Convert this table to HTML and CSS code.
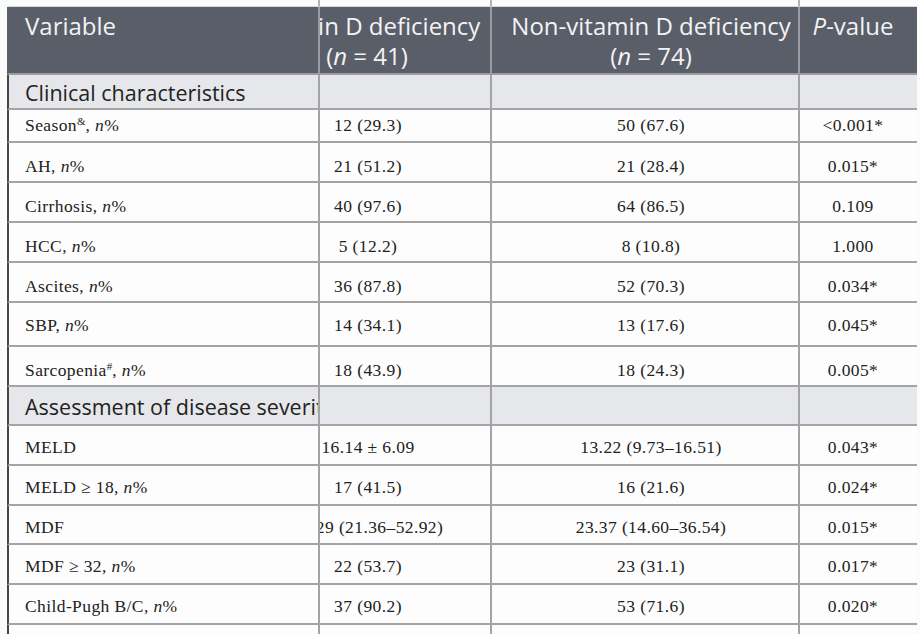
FILE: index.html
```html
<!DOCTYPE html>
<html lang="en">
<head>
<meta charset="utf-8">
<title>Table</title>
<link rel="stylesheet" href="styles.css">
</head>
<body>
<table class="tbl">
  <colgroup><col class="c1"><col class="c2"><col class="c3"><col class="c4"></colgroup>
  <thead>
    <tr class="strip"><td></td><td></td><td></td><td></td></tr>
    <tr class="head">
      <th class="var">Variable</th>
      <th class="g1"><div class="shift">Vitamin D deficiency<br>(<i>n</i> = 41)</div></th>
      <th class="g2">Non-vitamin D deficiency<br>(<i>n</i> = 74)</th>
      <th class="pv"><i>P</i>-value</th>
    </tr>
  </thead>
  <tbody class="clin">
    <tr class="sec"><td>Clinical characteristics</td><td></td><td></td><td></td></tr>
    <tr class="short"><td>Season<sup>&amp;</sup>, <i>n</i>%</td><td class="g1"><div class="shift">12 (29.3)</div></td><td class="g2">50 (67.6)</td><td class="pv">&lt;0.001*</td></tr>
    <tr><td>AH, <i>n</i>%</td><td class="g1"><div class="shift">21 (51.2)</div></td><td class="g2">21 (28.4)</td><td class="pv">0.015*</td></tr>
    <tr><td>Cirrhosis, <i>n</i>%</td><td class="g1"><div class="shift">40 (97.6)</div></td><td class="g2">64 (86.5)</td><td class="pv">0.109</td></tr>
    <tr><td>HCC, <i>n</i>%</td><td class="g1"><div class="shift">5 (12.2)</div></td><td class="g2">8 (10.8)</td><td class="pv">1.000</td></tr>
    <tr><td>Ascites, <i>n</i>%</td><td class="g1"><div class="shift">36 (87.8)</div></td><td class="g2">52 (70.3)</td><td class="pv">0.034*</td></tr>
    <tr class="tall"><td>SBP, <i>n</i>%</td><td class="g1"><div class="shift">14 (34.1)</div></td><td class="g2">13 (17.6)</td><td class="pv">0.045*</td></tr>
    <tr><td>Sarcopenia<sup>#</sup>, <i>n</i>%</td><td class="g1"><div class="shift">18 (43.9)</div></td><td class="g2">18 (24.3)</td><td class="pv">0.005*</td></tr>
  </tbody>
  <tbody class="sev">
    <tr class="sec sec2"><td>Assessment of disease severity</td><td></td><td></td><td></td></tr>
    <tr><td>MELD</td><td class="g1"><div class="shift">16.14 ± 6.09</div></td><td class="g2">13.22 (9.73–16.51)</td><td class="pv">0.043*</td></tr>
    <tr><td>MELD ≥ 18, <i>n</i>%</td><td class="g1"><div class="shift">17 (41.5)</div></td><td class="g2">16 (21.6)</td><td class="pv">0.024*</td></tr>
    <tr class="snug"><td>MDF</td><td class="g1"><div class="shift">35.29 (21.36–52.92)</div></td><td class="g2">23.37 (14.60–36.54)</td><td class="pv">0.015*</td></tr>
    <tr><td>MDF ≥ 32, <i>n</i>%</td><td class="g1"><div class="shift">22 (53.7)</div></td><td class="g2">23 (31.1)</td><td class="pv">0.017*</td></tr>
    <tr><td>Child-Pugh B/C, <i>n</i>%</td><td class="g1"><div class="shift">37 (90.2)</div></td><td class="g2">53 (71.6)</td><td class="pv">0.020*</td></tr>
    <tr class="cut"><td></td><td></td><td></td><td></td></tr>
  </tbody>
</table>
</body>
</html>
```

FILE: styles.css
```css
html, body {
  margin: 0;
  padding: 0;
  background: #fbfbfb;
}
body {
  width: 920px;
  height: 634px;
  overflow: hidden;
}
.tbl {
  margin-left: 7px;
  width: 910px;
  table-layout: fixed;
  border-collapse: separate;
  border-spacing: 0;
  font-family: "Liberation Serif", "Times New Roman", serif;
  font-size: 17.5px;
  color: #222;
  background: #fdfdfd;
}
.c1 { width: 313px; }
.c2 { width: 172px; }
.c3 { width: 308px; }
.c4 { width: 117px; }

.tbl td, .tbl th {
  box-sizing: border-box;
  padding: 13px 0 0 0;
  border-right: 2px solid #a4a4a4;
  border-bottom: 2px solid #a4a4a4;
  white-space: nowrap;
  overflow: hidden;
  vertical-align: top;
  line-height: 20px;
  letter-spacing: 0.4px;
  font-weight: normal;
  text-align: left;
}
.tbl td:last-child, .tbl th:last-child { border-right: 0; }
.tbl td:first-child, .tbl th:first-child {
  border-left: 2px solid #464646;
  padding-left: 16px;
}
.tbl tr { height: 40px; }
.tbl .g1 { text-align: left; }
.tbl .g2 { text-align: center; padding-left: 12px; }
.tbl .pv { text-align: center; padding-right: 11px; }
.shift {
  width: 240px;
  margin-left: -72px;
  text-align: center;
}
sup {
  font-size: 11px;
  line-height: 0;
  vertical-align: 6px;
  letter-spacing: 0;
}

/* strip of the row above */
.tbl .strip { height: 7px; }
.tbl .strip td {
  padding: 0;
  border-bottom: 1px solid #d6d6d6;
  border-right-color: #b4b4b4;
  background: #fbfbfb;
}
.tbl .strip td:first-child { border-left-color: #fbfbfb; }

/* header */
.tbl .head { height: 68px; }
.tbl .head th {
  background: #5a5e68;
  color: #f2f3f5;
  font-family: "Open Sans", "Noto Sans", sans-serif;
  font-size: 24px;
  line-height: 30px;
  letter-spacing: 0;
  padding-top: 4px;
  text-align: center;
  border-right-color: #9a9ca2;
  border-bottom-color: #9a9ca2;
}
.tbl .head th.var {
  text-align: left;
  border-left-color: #5a5e68;
}
.tbl .head th.g2 { padding-left: 12px; }
.tbl .head .shift { margin-left: -73px; }

/* section rows */
.tbl .sec { height: 35px; }
.tbl .sec td {
  background: #e6e7eb;
  color: #222;
  font-family: "Open Sans", "Noto Sans", sans-serif;
  font-size: 21.5px;
  line-height: 24px;
  letter-spacing: 0;
  padding-top: 6px;
}
.tbl .sec2 { height: 39px; }
.tbl .sec2 td { padding-top: 8px; }

.tbl .short { height: 33px; }
.tbl .short td { padding-top: 5px; }
.tbl .tall { height: 44px; }
.tbl .tall td { padding-top: 12px; }
.tbl .sev tr td { padding-top: 11px; }
.tbl .sev .sec td { padding-top: 8px; }
.tbl .snug { height: 39px; }
.tbl .cut { height: 20px; }
.tbl .cut td { border-bottom: 0; }
```
